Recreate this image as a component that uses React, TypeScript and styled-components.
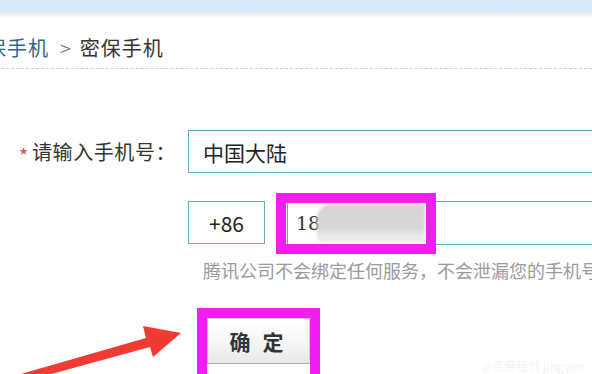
import React from "react";
import styled, { createGlobalStyle } from "styled-components";

const GlobalStyle = createGlobalStyle`
    html, body {
        margin: 0;
        padding: 0;
        background: #fff;
        overflow: hidden;
    }
    body {
        font-family: "Noto Sans CJK SC", "Noto Sans", sans-serif;
        color: #333;
    }
`;

const Page = styled.div`
    position: relative;
    width: 592px;
    height: 374px;
    overflow: hidden;
`;

const TopBar = styled.div`
    height: 17px;
    background: linear-gradient(
        to bottom,
        #d5e8fb 0,
        #d8e9fa 11px,
        #ebecec 14px,
        #fafafa 17px
    );
`;

const Breadcrumb = styled.div`
    display: flex;
    align-items: center;
    height: 52px;
    padding-top: 10px;
    box-sizing: border-box;
    margin-left: -14px;
    font-size: 20px;
    letter-spacing: 1px;
    border-bottom: 1px dashed #cfcfcf;
`;

const CrumbLink = styled.span`
    color: #2f6788;
`;

const CrumbSep = styled.span`
    color: #666;
    margin: 0 8px 0 11px;
    font-size: 20px;
    font-weight: 300;
`;

const CrumbCurrent = styled.span`
    color: #333;
`;

const Form = styled.div`
    display: grid;
    grid-template-columns: 188px 1fr;
    padding-top: 61px;
`;

const Label = styled.div`
    display: flex;
    align-items: center;
    height: 43px;
    padding-left: 19px;
    font-size: 20px;
    letter-spacing: 0.6px;
    color: #333;
`;

const Star = styled.span`
    color: #f04848;
    font-size: 20px;
    line-height: 1;
    margin-right: 3px;
    margin-top: 8px;
`;

const Field = styled.div<{ $width?: number }>`
    display: flex;
    align-items: center;
    box-sizing: border-box;
    height: 43px;
    width: ${(p) => (p.$width ? `${p.$width}px` : "100%")};
    padding-left: 14px;
    border: 1.5px solid #62b2bd;
    background: #fff;
    font-size: 21px;
    color: #222;
`;

const Spacer = styled.div``;

const PhoneRow = styled.div`
    display: flex;
    gap: 22px;
    margin-top: 28px;
`;

const CodeBox = styled(Field)`
    justify-content: center;
    padding-left: 0;
    width: 77px;
    flex: none;
`;

const PhoneWrap = styled.div`
    position: relative;
    flex: none;
`;

const PhoneInput = styled(Field)`
    width: 330px;
    height: 44px;
    padding-left: 8px;
    font-family: "DejaVu Serif", "Liberation Serif", serif;
    font-size: 19px;
    color: #333;
`;

const Blur = styled.div`
    position: absolute;
    left: 30px;
    top: 3px;
    width: 108px;
    height: 39px;
    border-radius: 14px 0 0 6px;
    background: linear-gradient(
        to bottom,
        #d3d3d3 0,
        #d6d6d6 24px,
        #e6ecee 32px,
        #e9eef0 100%
    );
    filter: blur(1.5px);
`;

const Highlight = styled.div<{ $w: number; $h: number; $l: number; $t: number }>`
    position: absolute;
    left: ${(p) => p.$l}px;
    top: ${(p) => p.$t}px;
    width: ${(p) => p.$w}px;
    height: ${(p) => p.$h}px;
    box-sizing: border-box;
    border: 10px solid #f11ef1;
    pointer-events: none;
`;

const Hint = styled.div`
    margin-top: 12px;
    padding-left: 15px;
    font-size: 18px;
    color: #9a9a9a;
    white-space: nowrap;
`;

const ButtonWrap = styled.div`
    position: relative;
    margin-top: 35px;
    padding-left: 19px;
`;

const Submit = styled.button`
    width: 103px;
    height: 46px;
    border: 1px solid #cfcfcf;
    border-bottom-color: #a9a9a9;
    background: linear-gradient(to bottom, #ffffff 0, #f6f6f6 50%, #e9e9e9 100%);
    font-family: "Noto Sans CJK SC", sans-serif;
    font-weight: 700;
    font-size: 21px;
    letter-spacing: 12px;
    padding-left: 14px;
    color: #333;
`;

const Arrow = styled.svg`
    position: absolute;
    left: 0;
    top: 300px;
`;

const Watermark = styled.div`
    position: absolute;
    right: 8px;
    bottom: 0;
    font-size: 12px;
    color: #f3f3f3;
`;

export default function App() {
    return (
        <Page>
            <GlobalStyle />
            <TopBar />
            <Breadcrumb>
                <CrumbLink>保手机</CrumbLink>
                <CrumbSep>&gt;</CrumbSep>
                <CrumbCurrent>密保手机</CrumbCurrent>
            </Breadcrumb>

            <Form>
                <Label>
                    <Star>*</Star>
                    请输入手机号：
                </Label>
                <Field>中国大陆</Field>

                <Spacer />
                <div>
                    <PhoneRow>
                        <CodeBox>+86</CodeBox>
                        <PhoneWrap>
                            <PhoneInput>18</PhoneInput>
                            <Blur />
                            <Highlight $l={-11} $t={-8} $w={160} $h={61} />
                        </PhoneWrap>
                    </PhoneRow>
                    <Hint>腾讯公司不会绑定任何服务，不会泄漏您的手机号</Hint>
                    <ButtonWrap>
                        <Submit>确定</Submit>
                        <Highlight $l={9} $t={-10} $w={123} $h={90} />
                    </ButtonWrap>
                </div>
            </Form>

            <Arrow width="200" height="74" viewBox="0 0 200 74">
                <polygon
                    points="14,76 146,38 143,26 181,33 153,57 150,47 22,82"
                    fill="#f23a35"
                />
            </Arrow>

            <Watermark>@百度经验 jingyan</Watermark>
        </Page>
    );
}
